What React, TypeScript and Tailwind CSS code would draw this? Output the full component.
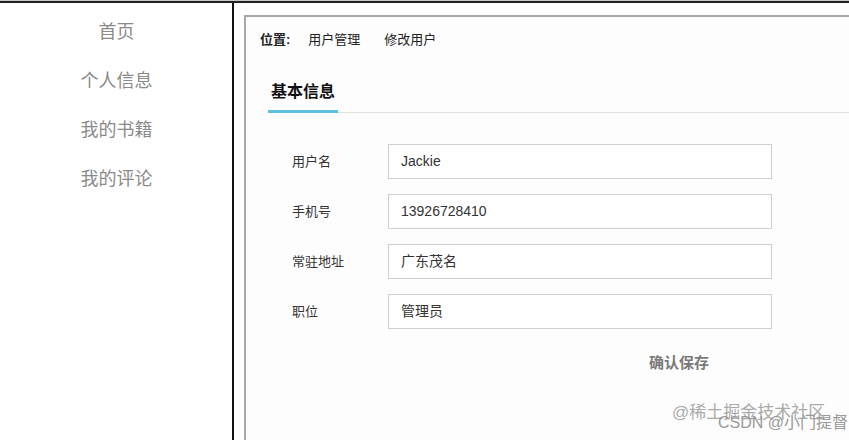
const menu = ["首页", "个人信息", "我的书籍", "我的评论"];

const fields = [
  { label: "用户名", value: "Jackie" },
  { label: "手机号", value: "13926728410" },
  { label: "常驻地址", value: "广东茂名" },
  { label: "职位", value: "管理员" },
];

export default function App() {
  return (
    <div className="relative h-[440px] w-[849px] overflow-hidden bg-white font-['Liberation_Sans','Noto_Sans_CJK_SC',sans-serif]">
      <div className="h-px bg-[#c8c8c8]" />
      <div className="h-[2px] bg-[#222]" />
      <div className="flex h-[437px]">
        {/* sidebar */}
        <aside className="w-[234px] shrink-0 border-r-2 border-[#111] pt-[18px]">
          <ul className="flex flex-col items-center gap-[27px] pl-[1px] text-[18px] leading-[22px] text-[#8a8a8a]">
            {menu.map((m) => <li key={m}>{m}</li>)}
          </ul>
        </aside>

        {/* main */}
        <main className="flex-1 pl-[10px] pt-[12px]">
          <div className="h-[440px] w-[640px] border-l-2 border-t-2 border-[#a8a8a8] bg-[#fdfdfd]">
            <div className="flex items-center pl-[14px] pt-[15px] text-[13px] leading-[16px] text-[#222]">
              <span className="font-bold">位置:</span>
              <span className="ml-[18px]">用户管理</span>
              <span className="ml-[24px]">修改用户</span>
            </div>

            <div className="ml-[22px] mt-[34px] flex border-b border-[#e0e0e0]">
              <div className="-mb-px border-b-[3px] border-[#5bc0de] px-[3px] pb-[8px] text-[16px] font-bold leading-[20px] text-[#111]">
                基本信息
              </div>
            </div>

            <div className="mt-[31px] flex flex-col gap-[15px]">
              {fields.map((f) => (
                <div key={f.label} className="flex items-center">
                  <label className="w-[142px] pl-[46px] text-[13px] text-[#333]">{f.label}</label>
                  <div className="flex h-[35px] w-[384px] items-center border border-[#cfcfcf] bg-white px-[12px] text-[14px] text-[#333]">
                    {f.value}
                  </div>
                </div>
              ))}
            </div>

            <div className="mt-[24px] pl-[403px] text-[15px] font-bold leading-[20px] text-[#7a7a7a]">确认保存</div>
          </div>
        </main>
      </div>

      {/* watermark */}
      <div className="absolute left-[672px] top-[403px] text-[17px] leading-[20px] text-[#aaa]">@稀土掘金技术社区</div>
      <div className="absolute left-[718px] top-[413px] text-[16px] leading-[20px] text-[#999]">CSDN @小门提督</div>
    </div>
  );
}
